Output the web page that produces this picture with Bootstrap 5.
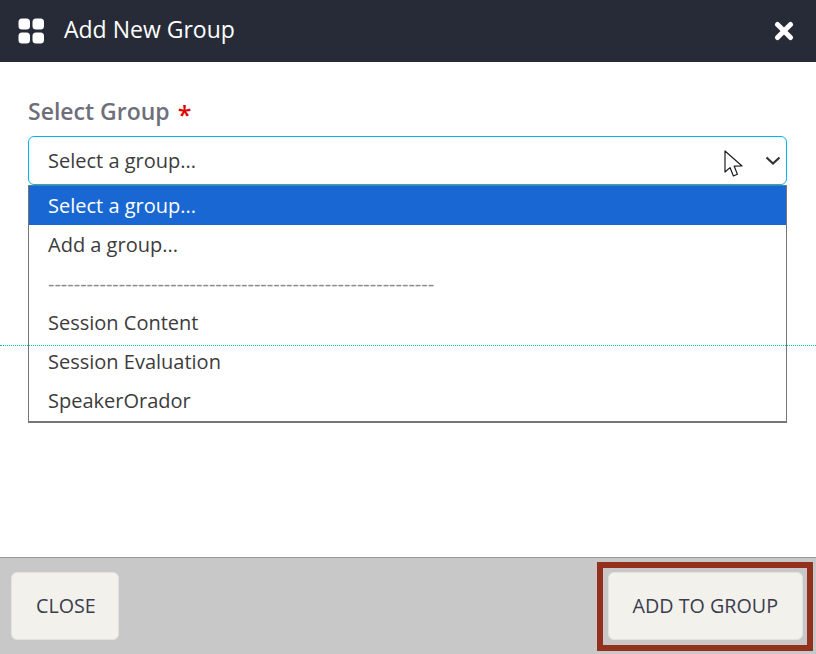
<!DOCTYPE html>
<html lang="en">
<head>
    <meta charset="UTF-8">
    <title>Add New Group</title>
    <link href="https://cdn.jsdelivr.net/npm/bootstrap@5.3.3/dist/css/bootstrap.min.css" rel="stylesheet">
    <style>
        html, body { height: 100%; overflow: hidden; }
        body { font-family: "Open Sans", sans-serif; color: #3c3c3c; background: #fff; }
        .dlg { height: 654px; }
        .dlg-head { height: 62px; background: #272b38; color: #fff; padding: 0 22px 0 18px; }
        .dlg-title { font-size: 23px; margin-left: 19px; line-height: 1; margin-bottom: 3px; }
        .dlg-close { width: 20px; height: 20px; }
        .dlg-body { padding: 34px 29px 0 28px; }
        .group-label { font-size: 23px; font-weight: 600; color: #6e6f7b; line-height: 30px; height: 30px; margin-bottom: 10px; }
        .req { color: #e00000; margin-left: 2px; font-size: 25px; line-height: 1; vertical-align: -4px; }
        .group-wrap { position: relative; }
        .group-select.form-select {
            height: 49px; padding: 0 40px 0 19px; font-size: 20px; color: #3c3c3c;
            border: 1px solid #00b4f0; border-radius: 6px; box-shadow: none;
            background-image: url("data:image/svg+xml,%3csvg xmlns='http://www.w3.org/2000/svg' viewBox='0 0 16 10'%3e%3cpath fill='none' stroke='%23333' stroke-width='2.2' d='M1.5 1.5l6.5 6 6.5-6'/%3e%3c/svg%3e");
            background-size: 16px 10px; background-position: right 5px center;
        }
        .group-menu.dropdown-menu {
            display: block; position: absolute; top: 49px; left: 0; right: 0; margin: 0; padding: 0;
            background: transparent; border: 1px solid #767676; border-bottom-width: 2px; border-radius: 0; height: 238px; min-width: 0;
        }
        .group-menu .dropdown-item { height: 39px; line-height: 40px; padding: 0 19px; font-size: 20px; color: #3c3c3c; }
        .group-menu .dropdown-item:hover { background: transparent; }
        .group-menu .dropdown-item.active { background: #1967d2; color: #fff; }
        .group-menu .sep-row { color: #8a8a8a; overflow: hidden; white-space: nowrap; }
        .arrow-cursor { position: absolute; left: 696px; top: 14px; width: 20px; height: 29px; }
        .dots { border-top: 1px dotted #00bfae; opacity: 1; margin: 160px -29px 0 -28px; }
        .dlg-foot { height: 97px; background: #c8c8c8; border-top: 1px solid #999; padding: 4px 3px 3px 11px; }
        .foot-btn.btn {
            height: 68px; background: #f2f1ec; border: 1px solid #e2e2de; border-radius: 6px;
            color: #3a3d4c; font-size: 19.7px; padding: 0 24px;
        }
        .close-btn { width: 108px; margin-top: 10px; }
        .add-outline { border: 6px solid #93301e; padding: 4px 4px 5px 5px; }
    </style>
</head>
<body>
<div class="dlg d-flex flex-column">
    <div class="dlg-head d-flex align-items-center">
        <svg width="27" height="26" viewBox="0 0 27 26" fill="#fff">
            <rect x="0.5" y="0.5" width="11.5" height="11" rx="3.5"/>
            <rect x="14.5" y="0.5" width="11.5" height="11" rx="3.5"/>
            <rect x="0.5" y="14.5" width="11.5" height="11" rx="3.5"/>
            <rect x="14.5" y="14.5" width="11.5" height="11" rx="3.5"/>
        </svg>
        <div class="dlg-title">Add New Group</div>
        <svg class="dlg-close ms-auto" viewBox="0 0 20 20">
            <path d="M3.5 3.5 L16.5 16.5 M16.5 3.5 L3.5 16.5" stroke="#fff" stroke-width="5" stroke-linecap="round"/>
        </svg>
    </div>

    <div class="dlg-body flex-grow-1">
        <div class="group-label">Select Group <span class="req">*</span></div>
        <div class="group-wrap">
            <select class="form-select group-select">
                <option>Select a group...</option>
            </select>
            <div class="dropdown-menu group-menu">
                <div class="dropdown-item active">Select a group...</div>
                <div class="dropdown-item">Add a group...</div>
                <div class="dropdown-item sep-row">------------------------------------------------------------</div>
                <div class="dropdown-item">Session Content</div>
                <div class="dropdown-item">Session Evaluation</div>
                <div class="dropdown-item">SpeakerOrador</div>
            </div>
            <svg class="arrow-cursor" viewBox="0 0 20 29">
                <path d="M1 1 V22 L6 17.6 L9.4 26 L13.4 24.2 L10.2 16.2 L18 16 Z" fill="#fff" stroke="#1c1c24" stroke-width="1.2" stroke-linejoin="round"/>
            </svg>
        </div>
        <hr class="dots">
    </div>

    <div class="dlg-foot d-flex justify-content-between align-items-start">
        <button class="btn foot-btn close-btn">CLOSE</button>
        <div class="add-outline">
            <button class="btn foot-btn">ADD TO GROUP</button>
        </div>
    </div>
</div>
</body>
</html>
